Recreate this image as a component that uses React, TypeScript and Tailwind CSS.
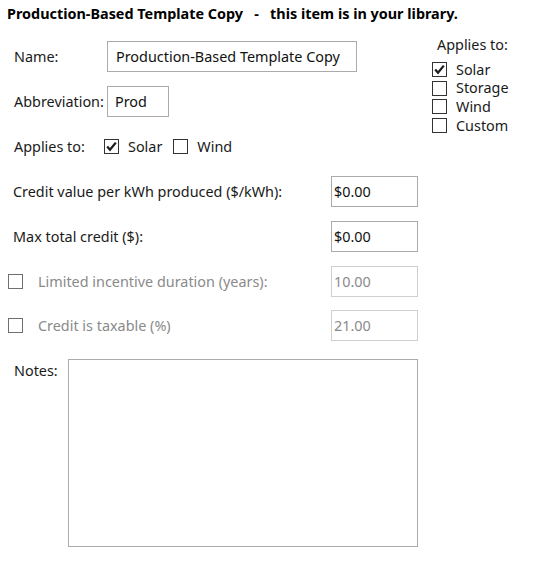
import React from "react";

const font = { fontFamily: '"Noto Sans", "Open Sans", sans-serif' };

function Check({ checked, disabled }: { checked?: boolean; disabled?: boolean }) {
  return (
    <span
      className={
        "flex h-[15px] w-[15px] shrink-0 items-center justify-center border bg-white " +
        (disabled ? "border-[#6f6f6f]" : "border-[#333333]")
      }
    >
      {checked && (
        <svg width="13" height="13" viewBox="0 0 13 13">
          <path d="M2.2 6.6 L5 9.8 L10.8 2.6" fill="none" stroke="#1e1e1e" strokeWidth="2.3" />
        </svg>
      )}
    </span>
  );
}

function Box({ value, w, disabled }: { value: string; w: string; disabled?: boolean }) {
  return (
    <div
      className={
        "flex h-[31px] shrink-0 items-center border bg-white " +
        w +
        (disabled ? " border-[#cfcfcf] text-[#8a8a8a]" : " border-[#ababab] text-[#111]")
      }
    >
      {value}
    </div>
  );
}

export default function App() {
  return (
    <div
      className="relative h-[575px] w-[541px] overflow-hidden bg-white text-[14.4px] leading-[18px] text-[#1a1a1a]"
      style={font}
    >
      <div className="whitespace-pre pl-[7px] pt-[5px] text-[14.4px] font-bold text-black">
        {"Production-Based Template Copy   -   this item is in your library."}
      </div>
      <div className="flex items-start">
        <div className="flex w-[425px] shrink-0 flex-col">
          <div className="mt-[18px] flex items-center">
            <span className="w-[107px] shrink-0 pl-[14px]">Name:</span>
            <Box value="Production-Based Template Copy" w="w-[250px] pl-[8px]" />
          </div>
          <div className="mt-[14px] flex items-center">
            <span className="w-[107px] shrink-0 pl-[14px]">Abbreviation:</span>
            <Box value="Prod" w="w-[62px] pl-[7px]" />
          </div>
          <div className="mt-[22px] flex h-[15px] items-center">
            <span className="w-[104px] shrink-0 pl-[14px]">Applies to:</span>
            <Check checked />
            <span className="ml-[9px] mr-[11px]">Solar</span>
            <Check />
            <span className="ml-[9px]">Wind</span>
          </div>
          <div className="mt-[22px] flex items-center">
            <span className="w-[331px] shrink-0 pl-[13px]">Credit value per kWh produced ($/kWh):</span>
            <Box value="$0.00" w="w-[87px] pl-[2px]" />
          </div>
          <div className="mt-[14px] flex items-center">
            <span className="w-[331px] shrink-0 pl-[13px]">Max total credit ($):</span>
            <Box value="$0.00" w="w-[87px] pl-[2px]" />
          </div>
          <div className="mt-[14px] flex items-center">
            <span className="flex w-[331px] shrink-0 items-center pl-[8px] text-[#8a8a8a]">
              <Check disabled />
              <span className="ml-[15px]">Limited incentive duration (years):</span>
            </span>
            <Box value="10.00" w="w-[87px] pl-[2px]" disabled />
          </div>
          <div className="mt-[13px] flex items-center">
            <span className="flex w-[331px] shrink-0 items-center pl-[8px] text-[#8a8a8a]">
              <Check disabled />
              <span className="ml-[15px]">Credit is taxable (%)</span>
            </span>
            <Box value="21.00" w="w-[87px] pl-[2px]" disabled />
          </div>
          <div className="mt-[18px] flex items-start">
            <span className="w-[68px] shrink-0 pl-[14px] pt-[3px]">Notes:</span>
            <div className="h-[188px] w-[350px] shrink-0 border border-[#ababab] bg-white" />
          </div>
        </div>
        <div className="ml-[7px] mt-[13px] flex flex-col">
          <span className="pl-[5px]">Applies to:</span>
          <div className="mt-[8px] flex flex-col gap-[3.7px]">
            {[
              ["Solar", true],
              ["Storage", false],
              ["Wind", false],
              ["Custom", false],
            ].map(([l, c]) => (
              <div key={l as string} className="flex h-[15px] items-center">
                <Check checked={c as boolean} />
                <span className="ml-[9px]">{l as string}</span>
              </div>
            ))}
          </div>
        </div>
      </div>
    </div>
  );
}
